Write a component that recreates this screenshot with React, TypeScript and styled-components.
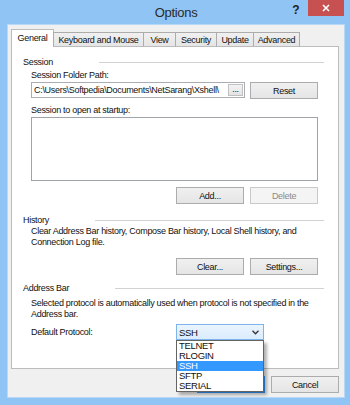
import React from "react";
import styled, { createGlobalStyle, css } from "styled-components";

const GlobalStyle = createGlobalStyle`
  html, body {
    margin: 0;
    padding: 0;
  }
  body {
    font-family: "Liberation Sans", Arial, sans-serif;
    font-size: 9px;
    letter-spacing: -0.3px;
    color: #111;
  }
  * {
    box-sizing: border-box;
  }
`;

const Window = styled.div`
  width: 350px;
  height: 405px;
  background: #8fc4f4;
  display: flex;
  flex-direction: column;
  padding: 0 6px 8px 8px;
`;

const TitleBar = styled.div`
  height: 25px;
  display: grid;
  grid-template-columns: 1fr auto 1fr;
  align-items: start;
`;

const Title = styled.div`
  grid-column: 2;
  font-size: 13px;
  letter-spacing: -0.3px;
  line-height: 26px;
  color: #2b2b2b;
`;

const Controls = styled.div`
  grid-column: 3;
  display: flex;
  justify-content: flex-end;
  align-items: flex-start;
`;

const HelpButton = styled.div`
  width: 12px;
  margin-right: 6px;
  font-weight: bold;
  font-size: 12px;
  letter-spacing: 0;
  line-height: 20px;
  text-align: center;
  color: #222;
`;

const CloseButton = styled.div`
  width: 36px;
  height: 16px;
  background: #c75050;
  display: flex;
  align-items: center;
  justify-content: center;
`;

const Body = styled.div`
  flex: 1;
  background: #f0f0f0;
  box-shadow: 0 0 0 1px #b9d8f6;
  padding: 4px 5px 0 3px;
  display: flex;
  flex-direction: column;
`;

const TabStrip = styled.div`
  height: 18px;
  display: flex;
  align-items: flex-end;
  margin-bottom: -1px;
  position: relative;
  z-index: 1;
`;

const Tab = styled.div<{ $w: number; $active?: boolean }>`
  width: ${({ $w }) => $w}px;
  height: 15px;
  margin-left: -1px;
  border: 1px solid #acacac;
  border-bottom-color: #bcbcbc;
  background: linear-gradient(#f0f0f0, #e5e5e5);
  display: flex;
  align-items: center;
  justify-content: center;
  white-space: nowrap;
  line-height: 12px;
  padding-top: 1px;
  &:first-child {
    margin-left: 0;
  }
  ${({ $active }) =>
    $active &&
    css`
      height: 18px;
      background: #fff;
      border-color: #bcbcbc;
      border-bottom: none;
      padding-top: 0;
      padding-bottom: 2px;
    `}
`;

const Panel = styled.div`
  height: 323px;
  background: #fff;
  border: 1px solid #bcbcbc;
  padding: 10px 14px 0 11px;
  display: flex;
  flex-direction: column;
`;

const GroupHeader = styled.div<{ $mt?: number }>`
  display: flex;
  align-items: center;
  gap: 46px;
  line-height: 11px;
  margin-top: ${({ $mt }) => $mt ?? 0}px;
  &::after {
    content: "";
    flex: 1;
    border-top: 1px solid #d2d2d2;
  }
`;

const Content = styled.div`
  margin: 0 6px 0 8px;
  display: flex;
  flex-direction: column;
`;

const Label = styled.div<{ $mt?: number }>`
  line-height: 11px;
  margin-top: ${({ $mt }) => $mt ?? 0}px;
  white-space: nowrap;
`;

const Row = styled.div<{ $mt?: number }>`
  display: flex;
  gap: 5px;
  margin-top: ${({ $mt }) => $mt ?? 0}px;
`;

const ButtonRow = styled.div<{ $mt?: number }>`
  display: flex;
  justify-content: flex-end;
  gap: 6px;
  margin-top: ${({ $mt }) => $mt ?? 0}px;
`;

const Button = styled.div<{ $disabled?: boolean; $default?: boolean }>`
  width: 68px;
  height: 17px;
  border: 1px solid #acacac;
  background: linear-gradient(#f0f0f0, #e5e5e5);
  display: flex;
  align-items: center;
  justify-content: center;
  ${({ $disabled }) =>
    $disabled &&
    css`
      border-color: #c9c9c9;
      background: #f4f4f4;
      color: #8a8a8a;
    `}
  ${({ $default }) =>
    $default &&
    css`
      border-color: #3399ff;
    `}
`;

const PathInput = styled.div`
  flex: 1;
  height: 16px;
  border: 1px solid #abadb3;
  background: #fff;
  display: flex;
  align-items: stretch;
  padding: 0 0 0 2px;
  overflow: hidden;
`;

const PathText = styled.span`
  flex: 1;
  overflow: hidden;
  white-space: nowrap;
  line-height: 14px;
`;

const BrowseButton = styled.div`
  width: 15px;
  margin: 1px;
  border: 1px solid #c0c0c0;
  background: linear-gradient(#f3f3f3, #e3e3e3);
  line-height: 8px;
  text-align: center;
`;

const ListBox = styled.div`
  height: 64px;
  margin-top: 1px;
  border: 1px solid #9fa3aa;
  background: #fff;
`;

const Description = styled.div<{ $mt?: number }>`
  line-height: 11px;
  margin-top: ${({ $mt }) => $mt ?? 0}px;
  white-space: nowrap;
`;

const ProtocolRow = styled.div`
  display: grid;
  grid-template-columns: 145px 88px;
  align-items: center;
  margin-top: 4px;
`;

const SelectWrap = styled.div`
  position: relative;
`;

const Select = styled.div`
  height: 16px;
  border: 1px solid #7eb4ea;
  background: linear-gradient(#eaf4fd, #dbecfc);
  display: flex;
  align-items: center;
  justify-content: space-between;
  padding: 0 4px 0 2px;
  font-size: 9.5px;
`;

const DropList = styled.div`
  position: absolute;
  top: 16px;
  left: 0;
  width: 88px;
  border: 1px solid #646464;
  background: #fff;
  box-shadow: 3px 3px 3px rgba(0, 0, 0, 0.3);
  z-index: 5;
`;

const DropItem = styled.div<{ $selected?: boolean }>`
  height: 10px;
  line-height: 10px;
  padding-left: 2px;
  font-size: 9.5px;
  ${({ $selected }) =>
    $selected &&
    css`
      background: #3399ff;
      color: #fff;
    `}
`;

const Footer = styled.div`
  display: flex;
  justify-content: flex-end;
  gap: 6px;
  margin-top: 7px;
`;

const tabs = [
  { name: "General", w: 43 },
  { name: "Keyboard and Mouse", w: 91 },
  { name: "View", w: 33 },
  { name: "Security", w: 42 },
  { name: "Update", w: 38 },
  { name: "Advanced", w: 47 },
];

const protocols = ["TELNET", "RLOGIN", "SSH", "SFTP", "SERIAL"];

const App: React.FC = () => {
  return (
    <>
      <GlobalStyle />
      <Window>
        <TitleBar>
          <Title>Options</Title>
          <Controls>
            <HelpButton>?</HelpButton>
            <CloseButton>
              <svg width="8" height="8" viewBox="0 0 8 8">
                <path d="M1 1 L7 7 M7 1 L1 7" stroke="#fff" strokeWidth="1.6" />
              </svg>
            </CloseButton>
          </Controls>
        </TitleBar>
        <Body>
          <TabStrip>
            {tabs.map((t, i) => (
              <Tab key={t.name} $w={t.w} $active={i === 0}>
                {t.name}
              </Tab>
            ))}
          </TabStrip>
          <Panel>
            <GroupHeader>Session</GroupHeader>
            <Content>
              <Label $mt={2}>Session Folder Path:</Label>
              <Row $mt={1}>
                <PathInput>
                  <PathText>C:\Users\Softpedia\Documents\NetSarang\Xshell\</PathText>
                  <BrowseButton>...</BrowseButton>
                </PathInput>
                <Button>Reset</Button>
              </Row>
              <Label $mt={6}>Session to open at startup:</Label>
              <ListBox />
              <ButtonRow $mt={6}>
                <Button>Add...</Button>
                <Button $disabled>Delete</Button>
              </ButtonRow>
            </Content>
            <GroupHeader $mt={11}>History</GroupHeader>
            <Content>
              <Description>
                Clear Address Bar history, Compose Bar history, Local Shell history, and
                <br />
                Connection Log file.
              </Description>
              <ButtonRow $mt={10}>
                <Button>Clear...</Button>
                <Button>Settings...</Button>
              </ButtonRow>
            </Content>
            <GroupHeader $mt={8}>Address Bar</GroupHeader>
            <Content>
              <Description $mt={4}>
                Selected protocol is automatically used when protocol is not specified in the
                <br />
                Address bar.
              </Description>
              <ProtocolRow>
                <Label>Default Protocol:</Label>
                <SelectWrap>
                  <Select>
                    <span>SSH</span>
                    <svg width="7" height="5" viewBox="0 0 7 5">
                      <path d="M0.5 0.8 L3.5 3.8 L6.5 0.8" stroke="#333" strokeWidth="1.3" fill="none" />
                    </svg>
                  </Select>
                  <DropList>
                    {protocols.map((p) => (
                      <DropItem key={p} $selected={p === "SSH"}>
                        {p}
                      </DropItem>
                    ))}
                  </DropList>
                </SelectWrap>
              </ProtocolRow>
            </Content>
          </Panel>
          <Footer>
            <Button $default>OK</Button>
            <Button>Cancel</Button>
          </Footer>
        </Body>
      </Window>
    </>
  );
};

export default App;
